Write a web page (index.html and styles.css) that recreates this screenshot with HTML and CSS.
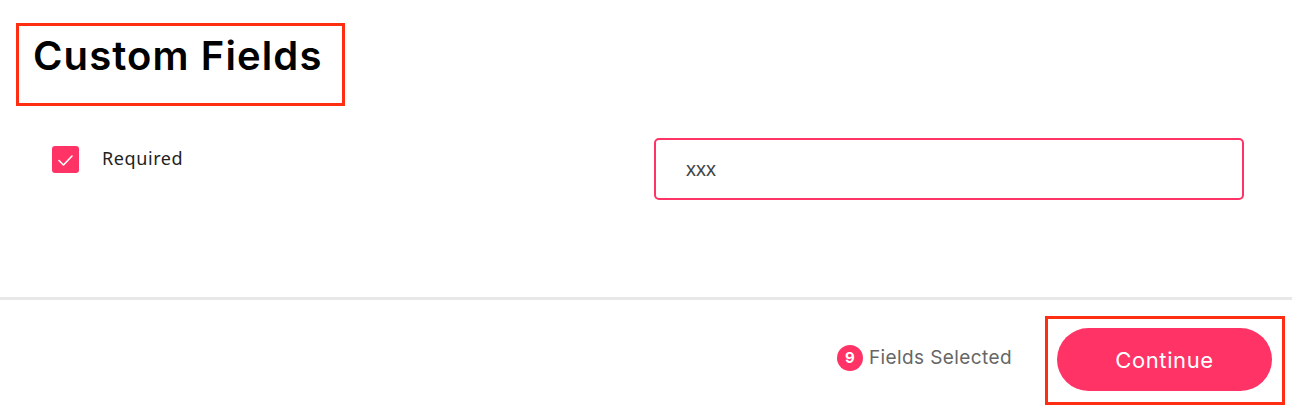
FILE: index.html
```html
<!DOCTYPE html>
<html>
<head>
<meta charset="utf-8">
<link rel="stylesheet" href="styles.css">
</head>
<body>
<div class="page">
  <header class="header">
    <div class="title-wrap">
      <h1 class="title">Custom Fields</h1>
      <span class="annot annot-title"></span>
    </div>
  </header>
  <section class="content">
    <label class="check-group">
      <span class="checkbox">
        <svg width="17" height="13" viewBox="0 0 17 13"><path d="M2 6.5 L6.5 11 L15 2" fill="none" stroke="#fff" stroke-width="1.6" stroke-linecap="round" stroke-linejoin="round"/></svg>
      </span>
      <span class="check-label">Required</span>
    </label>
    <div class="input-box">xxx</div>
  </section>
  <footer class="footer">
    <div class="selected">
      <span class="badge">9</span>
      <span class="selected-text">Fields Selected</span>
    </div>
    <div class="btn-wrap">
      <button class="btn">Continue</button>
      <span class="annot annot-btn"></span>
    </div>
  </footer>
</div>
</body>
</html>
```
FILE: styles.css
```css
* { box-sizing: border-box; }
html, body { margin: 0; padding: 0; background: #fff; }
body { font-family: Inter, "Noto Sans", sans-serif; color: #111; }
.page { width: 1292px; height: 414px; overflow: hidden; }

.header { height: 138px; padding: 23px 0 0 16px; }
.title-wrap { position: relative; width: 329px; height: 83px; padding: 9px 0 0 17px; }
.title { margin: 0; font-size: 40px; font-weight: 600; line-height: 48px; letter-spacing: 1.1px; color: #000; }

.annot { position: absolute; border: 3px solid #ff2d12; pointer-events: none; }
.annot-title { left: 0; top: 0; right: 0; bottom: 0; }

.content { height: 159px; display: flex; justify-content: space-between; align-items: flex-start; padding: 0 48px 0 52px; }
.check-group { display: flex; align-items: center; gap: 23px; margin-top: 8px; }
.checkbox { width: 27px; height: 27px; border-radius: 3px; background: #ff3366; display: flex; align-items: center; justify-content: center; padding-top: 2px; }
.check-label { font-size: 18px; letter-spacing: 0.6px; color: #222; font-family: "Noto Sans", Inter, sans-serif; margin-top: -3px; }

.input-box { width: 590px; height: 62px; border: 2px solid #ff3366; border-radius: 5px; padding: 0 0 0 30px; display: flex; align-items: center; font-size: 20px; color: #444; font-family: "Liberation Sans", Arial, sans-serif; }

.footer { border-top: 3px solid #e8e8e8; display: flex; justify-content: flex-end; align-items: center; padding: 28px 20px 0 0; }
.selected { display: flex; align-items: center; gap: 6px; margin-right: 45px; margin-top: -4px; }
.badge { width: 26px; height: 26px; border-radius: 50%; background: #ff3366; color: #fff; font-size: 15px; font-weight: 700; display: flex; align-items: center; justify-content: center; }
.selected-text { font-size: 19px; letter-spacing: 0.4px; color: #666; }

.btn-wrap { position: relative; }
.btn { width: 215px; height: 63px; border: none; border-radius: 32px; background: #ff3366; color: #fff; font-family: Inter, sans-serif; font-size: 22px; letter-spacing: 0.6px; font-weight: 400; cursor: pointer; }
.annot-btn { left: -12px; top: -12px; right: -13px; bottom: -14px; }
```
